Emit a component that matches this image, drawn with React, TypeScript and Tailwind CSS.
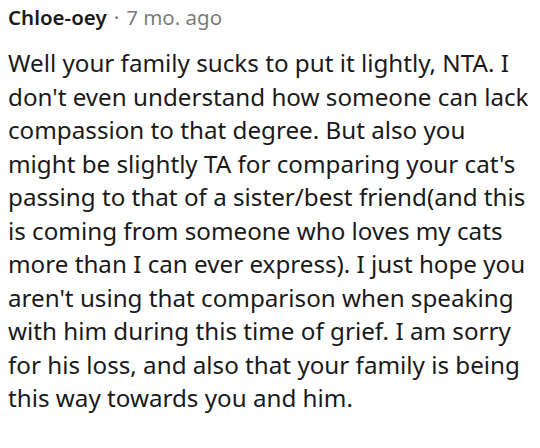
export default function App() {
  return (
    <div className="w-[540px] h-[448px] bg-white pl-[8px] pr-[4px] pt-[2px] overflow-hidden" style={{ fontFamily: '"Noto Sans", "Open Sans", sans-serif' }}>
      <div className="flex items-center text-[20.5px] leading-[30px]">
        <span className="font-semibold text-[#1a1a1b]">Chloe-oey</span>
        <span className="mx-[7px] text-[#7c7c7c]">·</span>
        <span className="text-[#7c7c7c]">7 mo. ago</span>
      </div>
      <p className="mt-[14px] text-[24.2px] leading-[33.5px] text-[#1a1a1b]">
        Well your family sucks to put it lightly, NTA. I don't even understand how someone can lack compassion to that degree. But also you might be slightly TA for comparing your cat's passing to that of a sister/best friend(and this is coming from someone who loves my cats more than I can ever express). I just hope you aren't using that comparison when speaking with him during this time of grief. I am sorry for his loss, and also that your family is being this way towards you and him.
      </p>
    </div>
  );
}
